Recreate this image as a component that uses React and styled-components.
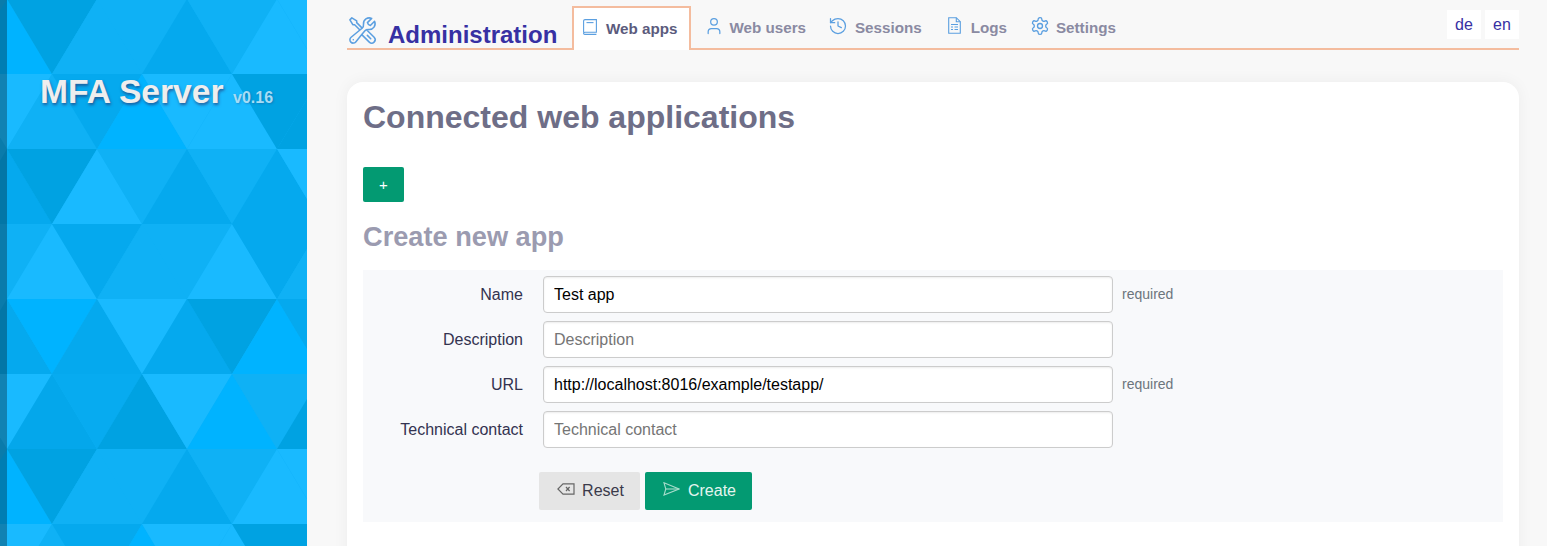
import React from "react";
import styled, { createGlobalStyle } from "styled-components";
import { HiOutlineWrenchScrewdriver } from "react-icons/hi2";
import { LuUser, LuHistory, LuSettings } from "react-icons/lu";

const GlobalStyle = createGlobalStyle`
  html, body {
    margin: 0;
    padding: 0;
    height: 100%;
    overflow: hidden;
    background: #f8f8f8;
    font-family: "Liberation Sans", Arial, sans-serif;
  }
`;

const Page = styled.div`
  display: flex;
  height: 100vh;
  overflow: hidden;
`;

const Sidebar = styled.aside`
  position: relative;
  flex: 0 0 307px;
  overflow: hidden;
  background: #0fb1f5;
`;

const Pattern = styled.svg`
  position: absolute;
  top: 0;
  left: 0;
`;

const Strip = styled.div`
  position: absolute;
  top: 0;
  bottom: 0;
  left: 0;
  width: 7px;
  background: rgba(0, 0, 0, 0.3);
`;

const Brand = styled.h1`
  position: relative;
  margin: 0;
  padding: 70px 0 0 40px;
  font-size: 33.6px;
  line-height: 43px;
  font-weight: 700;
  color: #eeeeee;
  text-shadow: 1px 2px 3px rgba(40, 50, 110, 0.65);
  white-space: nowrap;
`;

const Version = styled.small`
  margin-left: 9.5px;
  font-size: 16px;
  color: #a6dcf5;
  text-shadow: 1px 1px 2px rgba(40, 50, 110, 0.3);
`;

const Main = styled.main`
  flex: 1;
  min-width: 0;
  padding: 0 28px 0 40px;
`;

const Header = styled.header`
  display: flex;
  align-items: flex-end;
  height: 50px;
  box-sizing: border-box;
  border-bottom: 2px solid #f4bc9e;
`;

const Title = styled.div`
  display: flex;
  align-items: center;
  gap: 10px;
  width: 225px;
  height: 48px;
  box-sizing: border-box;
  font-size: 24px;
  font-weight: 700;
  color: #3730a3;
  white-space: nowrap;

  span {
    padding-top: 22px;
  }

  svg {
    margin-top: 13px;
    color: #5b9fe0;
  }
`;

const Tabs = styled.nav`
  display: flex;
  align-items: flex-end;
  height: 50px;
  margin-bottom: -2px;
`;

const Tab = styled.a`
  display: flex;
  align-items: center;
  gap: ${(p) => p.$gap}px;
  box-sizing: border-box;
  height: 44px;
  padding: 0 ${(p) => (p.$active ? "12px" : "12px")} 2px ${(p) => (p.$active ? 10 : 12)}px;
  margin-right: ${(p) => (p.$active ? 2 : 0)}px;
  font-size: 15.2px;
  font-weight: 700;
  color: ${(p) => (p.$active ? "#5b5b7d" : "#8a8aa2")};
  white-space: nowrap;
  background: ${(p) => (p.$active ? "#ffffff" : "transparent")};
  border: ${(p) => (p.$active ? "2px solid #f4bc9e" : "none")};
  border-bottom: none;

  svg {
    flex: none;
    margin-top: -3px;
    margin-left: ${(p) => p.$nudge}px;
    color: #5b9fe0;
  }
`;

const Langs = styled.div`
  display: flex;
  gap: 4px;
  margin-left: auto;
  align-self: flex-start;
  padding-top: 10px;
`;

const Lang = styled.a`
  display: flex;
  align-items: center;
  justify-content: center;
  width: 34px;
  height: 29px;
  background: #ffffff;
  color: #3730a3;
  font-size: 16px;
`;

const Card = styled.section`
  margin-top: 32px;
  height: 600px;
  padding: 16px;
  box-sizing: border-box;
  background: #ffffff;
  border-radius: 16px;
  box-shadow: 0 0 16px rgba(0, 0, 0, 0.05);
`;

const Heading = styled.h2`
  margin: 0;
  font-size: 32px;
  line-height: 38px;
  font-weight: 700;
  color: #6e6e87;
`;

const AddButton = styled.button`
  display: block;
  width: 41px;
  height: 35px;
  margin-top: 31px;
  padding: 0;
  border: none;
  border-radius: 2px;
  background: #039a72;
  color: #ffffff;
  font-family: inherit;
  font-size: 15px;
`;

const SubHeading = styled.h3`
  margin: 19px 0 0;
  font-size: 27.2px;
  line-height: 32px;
  font-weight: 700;
  color: #9b9bb0;
`;

const Form = styled.form`
  margin-top: 17px;
  padding: 6px 0 12px;
  background: #f8f9fb;
`;

const Row = styled.div`
  display: grid;
  grid-template-columns: 160px 570px auto;
  column-gap: 20px;
  align-items: center;
  height: 37px;
  margin-bottom: 8px;
`;

const Label = styled.label`
  text-align: right;
  font-size: 16px;
  color: #333350;
`;

const Input = styled.input`
  box-sizing: border-box;
  width: 570px;
  height: 37px;
  padding: 0 10px;
  border: 1px solid #cccccc;
  border-radius: 4px;
  background: #ffffff;
  box-shadow: inset 0 1px 2px rgba(0, 0, 0, 0.08);
  color: #000000;
  font-family: inherit;
  font-size: 16px;

  &::placeholder {
    color: #757575;
  }
`;

const Hint = styled.span`
  margin: 0 0 2px -11px;
  font-size: 14px;
  color: #6c757d;
`;

const Actions = styled.div`
  display: flex;
  gap: 5px;
  margin-top: 24px;
  padding-left: 176px;
`;

const ActionButton = styled.button`
  display: flex;
  align-items: center;
  justify-content: center;
  gap: ${(p) => p.$gap}px;
  width: ${(p) => p.$width}px;
  height: 38px;
  padding: 0 0 0 ${(p) => p.$pad}px;
  border: none;
  border-radius: 2px;
  background: ${(p) => (p.$primary ? "#039a72" : "#e5e5e5")};
  color: ${(p) => (p.$primary ? "#e4f5ef" : "#3a3a4a")};
  font-family: inherit;
  font-size: 16px;

  svg {
    flex: none;
    margin-top: -4px;
  }
`;

const A = "#00b3ff";
const B = "#19baff";
const C = "#0fb1f5";
const D = "#05a9ee";
const E = "#00a2e2";

// six rows, then the tile repeats; each row runs left to right from x = -38
const ROWS = [
  [A, E, C, C, D, C, B, B],
  [B, C, D, A, B, B, E, E],
  [D, E, B, C, D, C, D, B],
  [C, B, D, C, C, B, D, C],
  [D, A, D, B, D, E, A, D],
  [B, "#04a7eb", "#07abf0", E, B, A, C, E],
];

function triangles() {
  const out = [];
  const height = 75;
  for (let r = 0; r < 8; r++) {
    const y = r * height - 1;
    const colors = ROWS[r % 6];
    // even rows start with an upward triangle at apex 7, odd rows with a downward one at apex 7
    const up = r % 2 === 0;
    colors.forEach((fill, i) => {
      const x = -38 + i * 45;
      const pointsUp = up ? i % 2 === 0 : i % 2 === 1;
      const points = pointsUp
        ? `${x},${y + height} ${x + 45},${y} ${x + 90},${y + height}`
        : `${x},${y} ${x + 90},${y} ${x + 45},${y + height}`;
      out.push(<polygon key={`${r}-${i}`} points={points} fill={fill} />);
    });
  }
  return out;
}

function BookIcon() {
  return (
    <svg width="14" height="16" viewBox="0 0 14 16" fill="none" stroke="currentColor" strokeWidth="1.1">
      <path d="M.6 13.6V2A1.4 1.4 0 0 1 2 .6h11.4v12.6H2a1.3 1.3 0 0 0-1.4 1.1 1.1 1.1 0 0 0 1.2 1.1h11.6" />
      <path d="M3.5 3.6h7" />
    </svg>
  );
}

function FileIcon() {
  return (
    <svg width="13" height="17" viewBox="0 0 13 17" fill="none" stroke="currentColor" strokeWidth="1.1">
      <path d="M.7.7h7.6l4 4v11.6H.7z" />
      <path d="M8.3.7v4h4" />
      <path d="M3 7.5h7M3 10h2M6.5 10H10M3 12.5h2M6.5 12.5H10" />
    </svg>
  );
}

function BackspaceIcon() {
  return (
    <svg width="18" height="12" viewBox="0 0 18 12" fill="none" stroke="#666666" strokeWidth="1.2">
      <path d="M6 .8h11v10.4H6L.9 6z" />
      <path d="M9 4l3.6 4M12.6 4L9 8" />
    </svg>
  );
}

function SendIcon() {
  return (
    <svg width="17" height="14" viewBox="0 0 17 14" fill="none" stroke="#a6dccb" strokeWidth="1.1">
      <path d="M1 .8L16 7 1 13l1.8-6z" />
      <path d="M2.8 7H16" />
    </svg>
  );
}

export default function App() {
  return (
    <Page>
      <GlobalStyle />
      <Sidebar>
        <Pattern width="307" height="600" viewBox="0 0 307 600">
          {triangles()}
        </Pattern>
        <Strip />
        <Brand>
          MFA Server<Version>v0.16</Version>
        </Brand>
      </Sidebar>
      <Main>
        <Header>
          <Title>
            <HiOutlineWrenchScrewdriver size={31} strokeWidth={1.2} />
            <span>Administration</span>
          </Title>
          <Tabs>
            <Tab $active $gap={9} $nudge={-1}>
              <BookIcon />
              Web apps
            </Tab>
            <Tab $gap={5} $nudge={-1}>
              <LuUser size={20} strokeWidth={1.5} />
              Web users
            </Tab>
            <Tab $gap={7} $nudge={-2}>
              <LuHistory size={20} strokeWidth={1.5} />
              Sessions
            </Tab>
            <Tab $gap={10} $nudge={2}>
              <FileIcon />
              Logs
            </Tab>
            <Tab $gap={6} $nudge={-1}>
              <LuSettings size={20} strokeWidth={1.6} />
              Settings
            </Tab>
          </Tabs>
          <Langs>
            <Lang>de</Lang>
            <Lang>en</Lang>
          </Langs>
        </Header>
        <Card>
          <Heading>Connected web applications</Heading>
          <AddButton type="button">+</AddButton>
          <SubHeading>Create new app</SubHeading>
          <Form>
            <Row>
              <Label>Name</Label>
              <Input defaultValue="Test app" placeholder="Name" />
              <Hint>required</Hint>
            </Row>
            <Row>
              <Label>Description</Label>
              <Input placeholder="Description" />
            </Row>
            <Row>
              <Label>URL</Label>
              <Input defaultValue="http://localhost:8016/example/testapp/" placeholder="URL" />
              <Hint>required</Hint>
            </Row>
            <Row>
              <Label>Technical contact</Label>
              <Input placeholder="Technical contact" />
            </Row>
            <Actions>
              <ActionButton type="button" $width={101} $gap={7} $pad={2}>
                <BackspaceIcon />
                Reset
              </ActionButton>
              <ActionButton type="button" $width={107} $gap={8} $pad={2} $primary>
                <SendIcon />
                Create
              </ActionButton>
            </Actions>
          </Form>
        </Card>
      </Main>
    </Page>
  );
}
